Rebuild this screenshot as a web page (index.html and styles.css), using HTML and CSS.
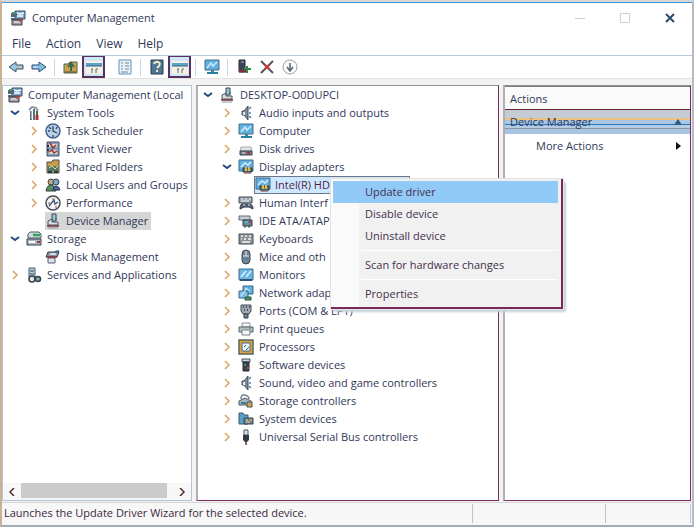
FILE: index.html
```html
<!DOCTYPE html>
<html lang="en">
<head>
    <meta charset="UTF-8">
    <meta name="viewport" content="width=device-width, initial-scale=1.0">
    <title>Computer Management</title>
    <link rel="stylesheet" href="styles.css">
</head>
<body>
    <!-- icon set -->
    <svg class="sprite" aria-hidden="true">
        <symbol id="i-mmc" viewBox="0 0 16 16"><path d="M5 1h10v8H5z" fill="#79aed3" stroke="#34465c"/><path d="M7 3l3 1 4-1M7 6h6" stroke="#f3fafd" fill="none" stroke-width="1.5"/><path d="M1 3h6v4H1zM1 8h12v2H1z" fill="#54677f"/><path d="M2 10h10v5H2z" fill="#a69ba2" stroke="#39404e"/><path d="M4 12h6" stroke="#fff"/><path d="M9 11l4-2" stroke="#b04a3c" stroke-width="2"/><path d="M2 3h3" stroke="#3c9f5a" stroke-width="2"/></symbol>
        <symbol id="i-tools" viewBox="0 0 16 16"><path d="M3 5l3-3 4 1 2 3" fill="none" stroke="#8d98a5" stroke-width="2"/><path d="M5 6v9M8 4v11" stroke="#5e6c80" stroke-width="2"/><path d="M6 6v8" stroke="#e6edf2"/><path d="M11 6v4" stroke="#39724c" stroke-width="2"/><path d="M11 10v5" stroke="#b3303c" stroke-width="3"/></symbol>
        <symbol id="i-clock" viewBox="0 0 16 16"><circle cx="8" cy="8" r="7" fill="#b9d3e6" stroke="#44618a" stroke-width="1.5"/><path d="M8 3v5l4 2M3 8h2M8 12v2M4 4l2 2M12 4l-1 2" stroke="#2f4364" fill="none" stroke-width="1.3"/></symbol>
        <symbol id="i-event" viewBox="0 0 16 16"><path d="M2 1h12v14H2z" fill="#7fa3bf" stroke="#4b4a68"/><path d="M4 3h8v3H4zM4 9h8v4H4z" fill="#e4d7c2"/><path d="M5 2l3 5 3-3M4 11l3-2 2 3 3-2" stroke="#9b2f3a" fill="none" stroke-width="1.5"/><path d="M2 5h2M2 9h2" stroke="#222f4c" stroke-width="2"/></symbol>
        <symbol id="i-folder" viewBox="0 0 16 16"><path d="M2 3h5l1-2h6v13H2z" fill="#c79d4c" stroke="#4c5348"/><path d="M3 7h10v5H3z" fill="#4e7668"/><path d="M4 9l3-2 3 3 3-3" stroke="#f1dc9c" fill="none"/><path d="M3 13h4M9 13h4" stroke="#24364a" stroke-width="2"/></symbol>
        <symbol id="i-users" viewBox="0 0 16 16"><circle cx="6" cy="5" r="3" fill="#c2a67e" stroke="#3e4650"/><circle cx="11" cy="5" r="3" fill="#7cacc5" stroke="#333f56"/><path d="M1 14q1-6 5-6t5 6z" fill="#5a8b63" stroke="#2e4338"/><path d="M8 13q0-4 3-4t4 4z" fill="#4d6b9c" stroke="#26354d"/></symbol>
        <symbol id="i-perf" viewBox="0 0 16 16"><circle cx="8" cy="8" r="7" fill="#f2f4f5" stroke="#474c55" stroke-width="1.5"/><path d="M4 11l5-6 1 4 3-2" stroke="#44546e" fill="none" stroke-width="1.4"/><path d="M3 8h2M8 3v2M10 12h2" stroke="#a44947"/></symbol>
        <symbol id="i-device" viewBox="0 0 16 16"><path d="M7 1h4v7H7z" fill="#9cc3d5" stroke="#36455a"/><path d="M3 8l4-2v3h6v3H3z" fill="#d8dde2" stroke="#4d5563"/><path d="M2 13h12" stroke="#75303b" stroke-width="1.5"/><path d="M3 15h10" stroke="#8f99a4"/><path d="M10 6h2" stroke="#3c9150" stroke-width="2"/></symbol>
        <symbol id="i-storage" viewBox="0 0 16 16"><path d="M2 3l2-2h9l2 2v4H2z" fill="#cfdbe0" stroke="#4b5a68"/><path d="M1 8h14v6H1z" fill="#a9b9c0" stroke="#333f4b"/><path d="M7 4h7" stroke="#36a255" stroke-width="2.5"/><path d="M3 11h6" stroke="#fff" stroke-width="2"/><path d="M11 11h3" stroke="#a5343c" stroke-width="2"/></symbol>
        <symbol id="i-disk" viewBox="0 0 16 16"><path d="M3 3h11l-2 5H1z" fill="#8894a0" stroke="#3f3644"/><path d="M5 5h6" stroke="#e8eef2" stroke-width="1.5"/><path d="M3 9h7v5H3z" fill="#dce2e8" stroke="#56606f"/><path d="M2 8h10" stroke="#8e2f3f" stroke-width="1.5"/><path d="M10 3l4-1" stroke="#316b93" stroke-width="2"/></symbol>
        <symbol id="i-services" viewBox="0 0 16 16"><path d="M3 1h6v9H3z" fill="#b9cdd6" stroke="#4d5d6c"/><path d="M4 4h4M4 7h4" stroke="#38506b"/><circle cx="6" cy="12" r="3" fill="#dfe5e8" stroke="#35404d" stroke-width="1.5"/><circle cx="12" cy="12" r="2.5" fill="#87b59d" stroke="#35404d" stroke-width="1.5"/></symbol>
        <symbol id="i-speaker" viewBox="0 0 16 16"><path d="M4 6h2l4-5v14l-4-5H4z" fill="#7f8b98" stroke="#404a57"/><path d="M6 7v3" stroke="#dfeaf0" stroke-width="2"/><path d="M11 4l2-2M11 8h2M11 11l2 2" stroke="#5c7ca0" stroke-width="1.5"/></symbol>
        <symbol id="i-monitor" viewBox="0 0 16 16"><path d="M1 1h14v10H1z" fill="#62b0df" stroke="#416c8d"/><path d="M3 9l4-5 2 3 4-4" stroke="#c9edfa" fill="none" stroke-width="1.5"/><path d="M7 11h3v2H7z" fill="#4c839c"/><path d="M3 14h11" stroke="#2a7f9d" stroke-width="2"/></symbol>
        <symbol id="i-screen" viewBox="0 0 16 16"><path d="M1 2h14v11H1z" fill="#6bb6e2" stroke="#416c8d"/><path d="M3 10l5-6M8 10l5-6" stroke="#d5f1fb" stroke-width="1.5"/><path d="M2 13h12" stroke="#2f5674" stroke-width="2"/></symbol>
        <symbol id="i-drive" viewBox="0 0 16 16"><path d="M3 6h10l1 4H2z" fill="#e1e3e5" stroke="#a5adb4"/><path d="M2 10h12v4H2z" fill="#777f88" stroke="#3b434e"/><path d="M4 12h3" stroke="#d5e4ed"/><path d="M9 12h3" stroke="#a93943" stroke-width="2"/></symbol>
        <symbol id="i-display" viewBox="0 0 16 16"><path d="M1 1h14v11H1z" fill="#62aedd" stroke="#416c8d"/><path d="M3 8l4-4 3 2 3-3" stroke="#d2f0fb" fill="none" stroke-width="1.5"/><path d="M5 9h9v4H5z" fill="#55805f" stroke="#2b3d4a"/><path d="M8 8v4M11 8v4" stroke="#e9b653" stroke-width="2"/><path d="M6 14h7" stroke="#8a3944"/></symbol>
        <symbol id="i-hid" viewBox="0 0 16 16"><path d="M1 2h13v6H1z" fill="#9ba5ad" stroke="#444a57"/><path d="M3 4h2M7 4h2M11 4h2M3 6h8" stroke="#f3f5f6"/><path d="M2 14q0-6 4-5h5q4 0 4 5l-4-2H6z" fill="#5a6471" stroke="#303846"/><path d="M5 10h2M10 10h2" stroke="#9ac5dd" stroke-width="1.5"/></symbol>
        <symbol id="i-ide" viewBox="0 0 16 16"><path d="M1 3h11v4H1z" fill="#c4cdd2" stroke="#636d78"/><path d="M5 7h9v6H5z" fill="#70868f" stroke="#313e4a"/><path d="M7 9h3" stroke="#54b5d4" stroke-width="2"/><path d="M11 12v3M7 13v2" stroke="#36414f"/><path d="M11 9h2" stroke="#a63f41" stroke-width="2"/></symbol>
        <symbol id="i-keyboard" viewBox="0 0 16 16"><path d="M1 3h14v10H1z" fill="#8c9195" stroke="#4a4f56"/><path d="M3 5h2M7 5h2M11 5h2M3 8h1M6 8h2M10 8h3M4 11h8" stroke="#f4f4f1" stroke-width="1.5"/></symbol>
        <symbol id="i-mouse" viewBox="0 0 16 16"><rect x="4" y="1" width="8" height="14" rx="4" fill="#77828d" stroke="#3d4654"/><path d="M5 7h6M8 2v5" stroke="#deebf1"/><path d="M6 10h4" stroke="#4d87b0" stroke-width="2"/></symbol>
        <symbol id="i-network" viewBox="0 0 16 16"><path d="M5 1h10v8H5z" fill="#62aedd" stroke="#39698d"/><path d="M1 6h9v7H1z" fill="#80c1e6" stroke="#39698d"/><path d="M3 11l6-8M7 3l5 3" stroke="#dff4fb"/><path d="M7 12h6v3H7z" fill="#4c9468" stroke="#295342"/></symbol>
        <symbol id="i-port" viewBox="0 0 16 16"><path d="M3 2h10v6l-2 3H5L3 8z" fill="#a2aab1" stroke="#434b56"/><path d="M5 4h1M8 4h1M11 4h1M6 7h1M9 7h1" stroke="#252e3c" stroke-width="1.5"/><path d="M6 11h4v4H6z" fill="#6c8291" stroke="#3c4552"/></symbol>
        <symbol id="i-printer" viewBox="0 0 16 16"><path d="M4 2h8v4H4z" fill="#f5f6f7" stroke="#88919a"/><path d="M1 6h14v5H1z" fill="#b8c0c6" stroke="#58616b"/><path d="M4 9h8v5H4z" fill="#f3f5f6" stroke="#78818c"/><path d="M11 7h2" stroke="#3ba05a" stroke-width="1.5"/></symbol>
        <symbol id="i-cpu" viewBox="0 0 16 16"><path d="M1 1h14v14H1z" fill="#d8a443" stroke="#59655e" stroke-width="1.5"/><path d="M4 4h8v8H4z" fill="#e8f0f3" stroke="#47698a"/><path d="M6 8l2-2M8 11l3-3" stroke="#46607a"/></symbol>
        <symbol id="i-soft" viewBox="0 0 16 16"><path d="M4 2h8v3H4z" fill="#cbd6dd" stroke="#47505c"/><path d="M5 5h6v9H5z" fill="#39434f" stroke="#252a38"/><path d="M6 8h2" stroke="#3c9865" stroke-width="2"/><path d="M9 11h2" stroke="#bd4b44" stroke-width="2"/></symbol>
        <symbol id="i-storctl" viewBox="0 0 16 16"><path d="M3 6q0-5 4-4t4 4" fill="none" stroke="#78838f" stroke-width="1.5"/><path d="M1 8l6-3 6 3v4H1z" fill="#aab5bd" stroke="#4b5663"/><path d="M3 10h5" stroke="#397b93" stroke-width="2"/><path d="M9 9h5v5H9z" fill="#d2a64d" stroke="#45505d"/></symbol>
        <symbol id="i-system" viewBox="0 0 16 16"><path d="M1 2h4l1 2h4v9H1z" fill="#5ba0c9" stroke="#3b5974"/><path d="M6 7h9v6H6z" fill="#6e8590" stroke="#334450"/><path d="M8 9h2M12 9h2M8 11h4" stroke="#f0cd7d"/></symbol>
        <symbol id="i-usb" viewBox="0 0 16 16"><path d="M6 1h4v5H6z" stroke="#4b525e" fill="#dfe5ea"/><path d="M5 6h6v5l-2 2H7l-2-2z" fill="#303947"/><path d="M8 12v4" stroke="#6a3141" stroke-width="1.5"/></symbol>
        <symbol id="i-back" viewBox="0 0 16 16"><path d="M8 3L1 8l7 5v-3h7V6H8z" fill="#9ec9dc" stroke="#36526f"/><path d="M9 8h5" stroke="#e9c178"/></symbol>
        <symbol id="i-forward" viewBox="0 0 16 16"><path d="M8 3l7 5-7 5v-3H1V6h7z" fill="#84bedd" stroke="#2e4f78"/><path d="M2 8h5" stroke="#e7f5fb"/></symbol>
        <symbol id="i-up" viewBox="0 0 16 16"><path d="M1 5h4l2-2h7v11H1z" fill="#c6a252" stroke="#54614d"/><path d="M8 12V5M5 8l3-4 3 4" stroke="#376b48" fill="none" stroke-width="2"/><path d="M2 13h11" stroke="#5b5039"/></symbol>
        <symbol id="i-pane" viewBox="0 0 16 16"><path d="M0 2h16v13H0z" fill="#f6f0e3"/><path d="M0 4h16v3H0z" fill="#5ca4ce"/><path d="M0 7h16" stroke="#395f7a"/><path d="M6 10v4M10 10v4M5 10h2M10 10h2" stroke="#596c7c"/></symbol>
        <symbol id="i-doc" viewBox="0 0 16 16"><path d="M2 1h12v14H2z" fill="#e7f3f8" stroke="#6192b8"/><path d="M4 4h2M8 4h4M4 7h2M8 7h4M4 10h2M8 10h4M4 13h7" stroke="#728392"/></symbol>
        <symbol id="i-help" viewBox="0 0 16 16"><path d="M2 1h12v14H2z" fill="#4b7795" stroke="#30394b"/><path d="M5 5q1-3 4-2t1 4l-2 2M8 11v2" fill="none" stroke="#eee8ce" stroke-width="2"/></symbol>
        <symbol id="i-update" viewBox="0 0 16 16"><path d="M3 1h6v12H3z" fill="#3d4556" stroke="#2d2e3d"/><path d="M5 3h3" stroke="#a9b6c0"/><path d="M3 12h7" stroke="#7d303e" stroke-width="3"/><path d="M8 10h7M11 7v7" stroke="#328447" stroke-width="2"/></symbol>
        <symbol id="i-delete" viewBox="0 0 16 16"><path d="M2 2l12 12M14 2L2 14" stroke="#56565f" stroke-width="2"/><path d="M6 6l4 4M10 6l-4 4" stroke="#db3539" stroke-width="2"/></symbol>
        <symbol id="i-disable" viewBox="0 0 16 16"><circle cx="8" cy="8" r="7" fill="#fbfbfb" stroke="#9b9fa2"/><path d="M8 4v7M5 8l3 4 3-4" fill="none" stroke="#59646e" stroke-width="1.5"/></symbol>
        <symbol id="i-right" viewBox="0 0 10 10"><path d="M3 1l4 4-4 4" fill="none" stroke="#dba261" stroke-width="1.5"/></symbol>
        <symbol id="i-down" viewBox="0 0 10 10"><path d="M1 3l4 3 4-3" fill="none" stroke="#28497f" stroke-width="2"/></symbol>
    </svg>

    <div class="window">
        <header class="titlebar">
            <svg class="icon"><use href="#i-mmc"/></svg>
            <h1>Computer Management</h1>
            <div class="caption">
                <button aria-label="Minimize"><svg viewBox="0 0 10 10"><path d="M0 5.500h10" stroke="#cfcfcf"/></svg></button>
                <button aria-label="Maximize"><svg viewBox="0 0 10 10"><path d="M.5.5h9v9h-9z" fill="none" stroke="#cfcfcf"/></svg></button>
                <button aria-label="Close"><svg viewBox="0 0 10 10"><path d="M1 1l8 8M9 1L1 9" stroke="#2d4a66" stroke-width="2"/></svg></button>
            </div>
        </header>

        <nav class="menubar">
            <button>File</button>
            <button>Action</button>
            <button>View</button>
            <button>Help</button>
        </nav>

        <div class="toolbar">
            <button aria-label="Back"><svg class="icon"><use href="#i-back"/></svg></button>
            <button aria-label="Forward"><svg class="icon"><use href="#i-forward"/></svg></button>
            <span class="sep"></span>
            <button aria-label="Up one level"><svg class="icon"><use href="#i-up"/></svg></button>
            <button class="pressed" aria-label="Console tree"><svg class="icon"><use href="#i-pane"/></svg></button>
            <span class="sep clear"></span>
            <button aria-label="Properties"><svg class="icon"><use href="#i-doc"/></svg></button>
            <span class="sep"></span>
            <button aria-label="Help"><svg class="icon"><use href="#i-help"/></svg></button>
            <button class="pressed" aria-label="Action pane"><svg class="icon"><use href="#i-pane"/></svg></button>
            <span class="sep"></span>
            <button aria-label="Scan"><svg class="icon"><use href="#i-monitor"/></svg></button>
            <span class="sep"></span>
            <button aria-label="Update driver"><svg class="icon"><use href="#i-update"/></svg></button>
            <button aria-label="Uninstall device"><svg class="icon"><use href="#i-delete"/></svg></button>
            <button aria-label="Disable device"><svg class="icon"><use href="#i-disable"/></svg></button>
        </div>

        <main class="panes">
            <section class="pane nav-pane">
                <div class="tree-box">
                    <div class="row"><svg class="icon"><use href="#i-mmc"/></svg><span>Computer Management (Local</span></div>
                    <ul class="tree">
                        <li>
                            <div class="row"><button class="toggle" aria-label="Collapse"><svg><use href="#i-down"/></svg></button><svg class="icon"><use href="#i-tools"/></svg><span>System Tools</span></div>
                            <ul>
                                <li class="row"><button class="toggle" aria-label="Expand"><svg><use href="#i-right"/></svg></button><svg class="icon"><use href="#i-clock"/></svg><span>Task Scheduler</span></li>
                                <li class="row"><button class="toggle" aria-label="Expand"><svg><use href="#i-right"/></svg></button><svg class="icon"><use href="#i-event"/></svg><span>Event Viewer</span></li>
                                <li class="row"><button class="toggle" aria-label="Expand"><svg><use href="#i-right"/></svg></button><svg class="icon"><use href="#i-folder"/></svg><span>Shared Folders</span></li>
                                <li class="row"><button class="toggle" aria-label="Expand"><svg><use href="#i-right"/></svg></button><svg class="icon"><use href="#i-users"/></svg><span>Local Users and Groups</span></li>
                                <li class="row"><button class="toggle" aria-label="Expand"><svg><use href="#i-right"/></svg></button><svg class="icon"><use href="#i-perf"/></svg><span>Performance</span></li>
                                <li class="row leaf"><div class="current"><svg class="icon"><use href="#i-device"/></svg><span>Device Manager</span></div></li>
                            </ul>
                        </li>
                        <li>
                            <div class="row"><button class="toggle" aria-label="Collapse"><svg><use href="#i-down"/></svg></button><svg class="icon"><use href="#i-storage"/></svg><span>Storage</span></div>
                            <ul>
                                <li class="row leaf"><svg class="icon"><use href="#i-disk"/></svg><span>Disk Management</span></li>
                            </ul>
                        </li>
                        <li class="row"><button class="toggle" aria-label="Expand"><svg><use href="#i-right"/></svg></button><svg class="icon"><use href="#i-services"/></svg><span>Services and Applications</span></li>
                    </ul>
                </div>
                <div class="scrollbar">
                    <button aria-label="Scroll left"><svg viewBox="0 0 8 8"><path d="M6 0L2 4l4 4" fill="none" stroke="#552b35" stroke-width="1.500"/></svg></button>
                    <div class="thumb"></div>
                    <button aria-label="Scroll right"><svg viewBox="0 0 8 8"><path d="M2 0l4 4-4 4" fill="none" stroke="#552b35" stroke-width="1.500"/></svg></button>
                </div>
            </section>

            <section class="pane device-pane">
                <div class="row"><button class="toggle" aria-label="Collapse"><svg><use href="#i-down"/></svg></button><svg class="icon"><use href="#i-device"/></svg><span>DESKTOP-O0DUPCI</span></div>
                <ul class="tree devices">
                    <li class="row"><button class="toggle" aria-label="Expand"><svg><use href="#i-right"/></svg></button><svg class="icon"><use href="#i-speaker"/></svg><span>Audio inputs and outputs</span></li>
                    <li class="row"><button class="toggle" aria-label="Expand"><svg><use href="#i-right"/></svg></button><svg class="icon"><use href="#i-monitor"/></svg><span>Computer</span></li>
                    <li class="row"><button class="toggle" aria-label="Expand"><svg><use href="#i-right"/></svg></button><svg class="icon"><use href="#i-drive"/></svg><span>Disk drives</span></li>
                    <li>
                        <div class="row"><button class="toggle" aria-label="Collapse"><svg><use href="#i-down"/></svg></button><svg class="icon"><use href="#i-display"/></svg><span>Display adapters</span></div>
                        <ul>
                            <li class="adapter">
                                <div class="selected"><svg class="icon"><use href="#i-display"/></svg><span>Intel(R) HD</span></div>
                                <div class="context-menu" role="menu">
                                    <button class="active" role="menuitem">Update driver</button>
                                    <button role="menuitem">Disable device</button>
                                    <button role="menuitem">Uninstall device</button>
                                    <hr>
                                    <button role="menuitem">Scan for hardware changes</button>
                                    <hr>
                                    <button role="menuitem">Properties</button>
                                </div>
                            </li>
                        </ul>
                    </li>
                    <li class="row"><button class="toggle" aria-label="Expand"><svg><use href="#i-right"/></svg></button><svg class="icon"><use href="#i-hid"/></svg><span>Human Interf</span></li>
                    <li class="row"><button class="toggle" aria-label="Expand"><svg><use href="#i-right"/></svg></button><svg class="icon"><use href="#i-ide"/></svg><span>IDE ATA/ATAP</span></li>
                    <li class="row"><button class="toggle" aria-label="Expand"><svg><use href="#i-right"/></svg></button><svg class="icon"><use href="#i-keyboard"/></svg><span>Keyboards</span></li>
                    <li class="row"><button class="toggle" aria-label="Expand"><svg><use href="#i-right"/></svg></button><svg class="icon"><use href="#i-mouse"/></svg><span>Mice and oth</span></li>
                    <li class="row"><button class="toggle" aria-label="Expand"><svg><use href="#i-right"/></svg></button><svg class="icon"><use href="#i-screen"/></svg><span>Monitors</span></li>
                    <li class="row"><button class="toggle" aria-label="Expand"><svg><use href="#i-right"/></svg></button><svg class="icon"><use href="#i-network"/></svg><span>Network adap</span></li>
                    <li class="row"><button class="toggle" aria-label="Expand"><svg><use href="#i-right"/></svg></button><svg class="icon"><use href="#i-port"/></svg><span>Ports (COM &amp; LPT)</span></li>
                    <li class="row"><button class="toggle" aria-label="Expand"><svg><use href="#i-right"/></svg></button><svg class="icon"><use href="#i-printer"/></svg><span>Print queues</span></li>
                    <li class="row"><button class="toggle" aria-label="Expand"><svg><use href="#i-right"/></svg></button><svg class="icon"><use href="#i-cpu"/></svg><span>Processors</span></li>
                    <li class="row"><button class="toggle" aria-label="Expand"><svg><use href="#i-right"/></svg></button><svg class="icon"><use href="#i-soft"/></svg><span>Software devices</span></li>
                    <li class="row"><button class="toggle" aria-label="Expand"><svg><use href="#i-right"/></svg></button><svg class="icon"><use href="#i-speaker"/></svg><span>Sound, video and game controllers</span></li>
                    <li class="row"><button class="toggle" aria-label="Expand"><svg><use href="#i-right"/></svg></button><svg class="icon"><use href="#i-storctl"/></svg><span>Storage controllers</span></li>
                    <li class="row"><button class="toggle" aria-label="Expand"><svg><use href="#i-right"/></svg></button><svg class="icon"><use href="#i-system"/></svg><span>System devices</span></li>
                    <li class="row"><button class="toggle" aria-label="Expand"><svg><use href="#i-right"/></svg></button><svg class="icon"><use href="#i-usb"/></svg><span>Universal Serial Bus controllers</span></li>
                </ul>
            </section>

            <section class="pane actions-pane">
                <h2>Actions</h2>
                <button class="group"><span>Device Manager</span><svg viewBox="0 0 8 8"><path d="M0 7l4-6 4 6z" fill="#31597d"/></svg></button>
                <button class="more"><span>More Actions</span><svg viewBox="0 0 8 8"><path d="M2 0l5 4-5 4z" fill="#111"/></svg></button>
            </section>
        </main>

        <footer class="status">
            <span class="message">Launches the Update Driver Wizard for the selected device.</span>
            <span class="cell"></span>
            <span class="cell short"></span>
        </footer>
    </div>
</body>
</html>
```
FILE: styles.css
```css
* {
    box-sizing: border-box;
}
body {
    margin: 0;
    font-family: "Open Sans", "Noto Sans", sans-serif;
    font-size: 11px;
    font-weight: 500;
    line-height: 18px;
    color: #303858;
    background: #dcdcdc;
}
h1, h2, ul {
    margin: 0;
    padding: 0;
    font-size: 11px;
    font-weight: 500;
    list-style: none;
}
button {
    margin: 0;
    padding: 0;
    border: 0;
    background: none;
    font: inherit;
    color: inherit;
}
.sprite {
    display: none;
}
.icon {
    width: 16px;
    height: 16px;
    flex: none;
}

/* window frame */
.window {
    display: flex;
    flex-direction: column;
    min-height: 100vh;
    border: 2px solid #d8d8d8;
    border-left-color: #c8b292;
    border-right-color: #b5bbc2;
    border-bottom-color: #a3abb5;
    background: #fff;
}
.titlebar {
    display: flex;
    align-items: center;
    height: 30px;
    padding-left: 8px;
    border-top: 1px solid #3c96d8;
}
.titlebar h1 {
    flex: 1;
    padding-left: 6px;
}
.caption {
    display: flex;
}
.caption button {
    display: flex;
    justify-content: center;
    width: 45px;
}
.caption svg {
    width: 10px;
    height: 10px;
}
.menubar {
    display: flex;
    gap: 15px;
    height: 23px;
    padding-left: 10px;
    font-size: 12px;
}
.toolbar {
    display: flex;
    align-items: center;
    height: 24px;
    padding-left: 2px;
    border-top: 1px solid #b4c8de;
    border-bottom: 1px solid #e2e2e2;
}
.toolbar button {
    display: flex;
    align-items: center;
    justify-content: center;
    width: 23px;
    height: 22px;
}
.toolbar .pressed {
    border: 2px solid #5a3060;
    border-top-width: 1px;
    background: #cfe6f7;
}
.sep {
    width: 1px;
    height: 17px;
    margin: 0 4px;
    background: #c9d7e4;
}
.sep.clear {
    width: 0;
}

/* panes */
.panes {
    display: grid;
    grid-template-columns: 190px 1fr 188px;
    gap: 4px;
    flex: 1;
    padding: 6px 1px 1px 0;
    background: #f3f3f3;
}
.pane {
    min-width: 0;
    background: #fff;
    border: 1px solid #8f8f8f;
}
.nav-pane {
    display: flex;
    flex-direction: column;
    border-color: #b4c4d6;
}
.tree-box {
    flex: 1;
    padding-left: 4px;
    overflow: hidden;
}
.device-pane {
    padding-left: 2px;
    border-left: 2px solid #b0b0b0;
    border-right-color: #7a2a5a;
    border-bottom-color: #7a2a5a;
}
.actions-pane {
    border-left: 2px solid #b0b0b0;
    border-right-color: #7a2a5a;
    border-bottom-color: #7a2a5a;
}
.row {
    display: flex;
    align-items: center;
    height: 18px;
    white-space: nowrap;
}
.row span {
    padding-left: 5px;
}
.tree ul, .devices {
    padding-left: 19px;
}
.toggle {
    display: flex;
    align-items: center;
    justify-content: center;
    width: 19px;
    padding-right: 4px;
    flex: none;
}
.toggle svg {
    width: 10px;
    height: 10px;
}
.leaf {
    padding-left: 19px;
}
.current {
    display: flex;
    align-items: center;
    padding-right: 3px;
    background: #d6d6d6;
}

/* selected adapter and its menu */
.adapter {
    position: relative;
    height: 18px;
    padding-left: 16px;
}
.selected {
    display: flex;
    align-items: center;
    width: 156px;
    height: 18px;
    border: 1px solid #6e7884;
    background: #cce8ff;
    white-space: nowrap;
}
.selected span {
    padding-left: 4px;
    color: #521f46;
}
.context-menu {
    position: absolute;
    top: 3px;
    left: 93px;
    z-index: 1;
    width: 232px;
    padding: 2px 3px 2px 2px;
    border-right: 2px solid #7a2a5a;
    border-bottom: 2px solid #7a2a5a;
    background: linear-gradient(90deg, #fafafa 28px, #f1f1f1 28px);
    box-shadow: 0 0 0 1px #e3e3e3, 3px 3px 2px #c4d0dc;
}
.context-menu button {
    display: block;
    width: 100%;
    height: 22px;
    padding-left: 32px;
    text-align: left;
    white-space: nowrap;
    color: #45304c;
}
.context-menu .active {
    background: #91c9f7;
}
.context-menu hr {
    height: 1px;
    margin: 3px 0 3px 28px;
    border: 0;
    background: #fff;
}

.scrollbar {
    display: flex;
    justify-content: space-between;
    height: 17px;
    background: #f7f7f7;
}
.scrollbar button {
    display: flex;
    align-items: center;
    justify-content: center;
    width: 18px;
}
.scrollbar svg {
    width: 8px;
    height: 8px;
}
.thumb {
    flex: 1;
    margin: 0 6px 2px 0;
    background: #cbcbcb;
}

/* actions */
.actions-pane h2 {
    height: 24px;
    padding: 3px 5px;
    border-top: 1px solid #7d7d7d;
    border-bottom: 1px solid #6e2230;
    background: #fafafa;
}
.group, .more {
    display: flex;
    align-items: center;
    justify-content: space-between;
    width: 100%;
    height: 24px;
    padding: 0 8px 0 5px;
}
.group {
    background: linear-gradient(#c5ccd5 0 8px, #edc27c 8px 10px, #a9c6e3 10px 14px, #237ac4 14px 15px, #b5cce4 15px 18px, #8b98a5 18px 19px, #a8c4e2 19px);
}
.more {
    padding-left: 31px;
}
.group svg, .more svg {
    width: 8px;
    height: 8px;
}

.status {
    display: flex;
    height: 23px;
    padding: 1px 1px 2px 2px;
    border-top: 1px solid #d6d6d6;
    background: #f7f7f7;
}
.message {
    flex: 1;
    color: #3b2940;
}
.cell {
    width: 133px;
    border-left: 1px solid #b8c5d2;
}
.cell.short {
    width: 86px;
    border-right: 1px solid #b8c5d2;
}
```
